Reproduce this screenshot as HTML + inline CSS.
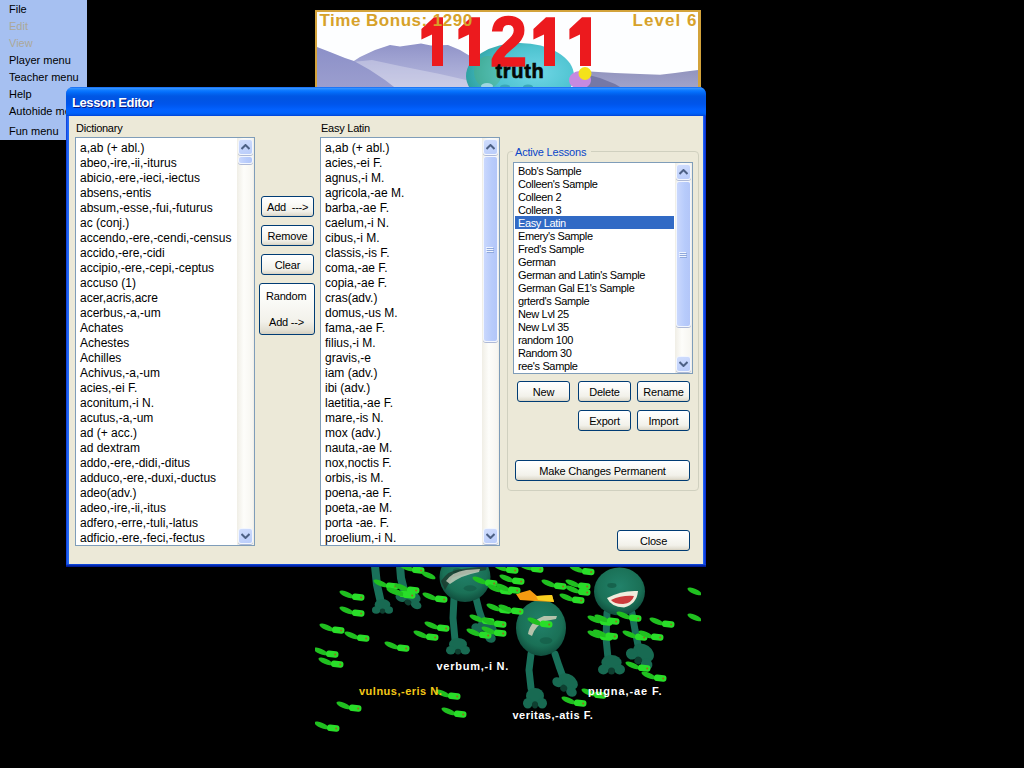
<!DOCTYPE html>
<html><head><meta charset="utf-8">
<style>
*{box-sizing:border-box}
html,body{margin:0;padding:0;background:#000;width:1024px;height:768px;overflow:hidden;font-family:"Liberation Sans",sans-serif}
.abs{position:absolute}
.t{position:absolute;white-space:pre;color:#000;line-height:1}
.m{font-size:11px}
.dis{color:#ACA899}
.lblf{font-size:11px;letter-spacing:-0.25px}
.lf{font-size:12px}
.af{font-size:11px;letter-spacing:-0.36px}
.bf{font-size:11px;letter-spacing:-0.2px}
.btn{position:absolute;border:1px solid #003C74;border-radius:3px;background:linear-gradient(#FFFFFF 0%,#FBFBF8 30%,#F2F1EA 75%,#E3E0D4 92%,#D6D0C0 100%)}
.lb{position:absolute;background:#fff;border:1px solid #7F9DB9}
.sb{position:absolute;background:linear-gradient(90deg,#F0EEE6,#FDFDFA 40%,#F7F6F1 90%,#EEECE4)}
.sbtn{position:absolute;border:1px solid #F2F6FE;border-radius:3px;background:linear-gradient(160deg,#D0DDFD,#B9CCFA);box-shadow:0 1px 0 #AEB9D6}
.thumb{position:absolute;border:1px solid #F2F6FE;border-radius:3px;background:linear-gradient(90deg,#CAD8FD,#B7CBFB 60%,#B3C6F8);box-shadow:0 1px 0 #AEB9D6}

</style></head><body>
<div id="root" class="abs" style="left:0;top:0;width:1024px;height:768px">
<svg class="abs" style="left:0;top:0" width="1024" height="768" viewBox="0 0 1024 768">
<defs>
<linearGradient id="mtA" x1="0" y1="0" x2="0" y2="1"><stop offset="0" stop-color="#8C90C8"/><stop offset="1" stop-color="#9C9FCF"/></linearGradient>
<linearGradient id="mtB" x1="0" y1="0" x2="0" y2="1"><stop offset="0" stop-color="#9093C8"/><stop offset="0.5" stop-color="#A6A9D5"/><stop offset="1" stop-color="#B9BBDD"/></linearGradient>
<linearGradient id="mtC" x1="0" y1="0" x2="0" y2="1"><stop offset="0" stop-color="#9294BE"/><stop offset="1" stop-color="#A3A5CB"/></linearGradient>
<radialGradient id="blob" cx="0.65" cy="0.45" r="0.7"><stop offset="0" stop-color="#6FD6E6"/><stop offset="0.55" stop-color="#4EC3D0"/><stop offset="1" stop-color="#2A9C9A"/></radialGradient>
<radialGradient id="head" cx="0.5" cy="0.4" r="0.65"><stop offset="0" stop-color="#22826A"/><stop offset="0.65" stop-color="#1A7056"/><stop offset="1" stop-color="#0D4436"/></radialGradient>
<g id="fish"><ellipse cx="-11.5" cy="-2.6" rx="7.6" ry="2.7" transform="rotate(24 -11.5 -2.6)" fill="#20C020"/><rect x="-6" y="-3.1" width="12.5" height="6.4" rx="3" transform="rotate(6)" fill="#29DE29"/><circle cx="3.2" cy="0.4" r="1" fill="#9A6A20"/></g>
</defs>
<rect x="315" y="10" width="386" height="80" fill="#D3A33B"/>
<rect x="317" y="12" width="381" height="78" fill="#FDFEFF"/>
<path d="M340 70 L360 57 L375 50 L390 45 L400 46.5 L414 44.5 L421 43.5 L431 45.5 L448 45 L460 50 L470 56 L480 62 L480 90 L330 90 Z" fill="url(#mtB)"/>
<path d="M352 62 L372 60 L400 66 L440 74 L475 82 L480 90 L360 90 Z" fill="#FFFFFF" opacity="0.28"/>
<path d="M317 47 L330 52 L345 58 L354 61 L370 70 L385 80 L398 90 L317 90 Z" fill="url(#mtA)"/>
<path d="M575 72 L590 71.5 L615 73 L640 74 L660 74.8 L675 73 L686 71.5 L698 70 L698 90 L575 90 Z" fill="url(#mtC)"/>
<path d="M585 74 L600 78 L615 84 L625 90 L585 90 Z" fill="#7578A6"/>
<ellipse cx="520" cy="76" rx="54" ry="33" fill="url(#blob)"/>
<ellipse cx="488" cy="72" rx="14" ry="16" fill="#55B070" opacity="0.35"/>
<ellipse cx="487" cy="86" rx="6" ry="3" fill="#9ED6E0"/><ellipse cx="505" cy="87" rx="5" ry="2.5" fill="#3AA7B8"/><ellipse cx="528" cy="87" rx="5" ry="2.5" fill="#3AA7B8"/>
<ellipse cx="580" cy="80" rx="11" ry="9" fill="#C68AE0"/>
<circle cx="585" cy="73.5" r="6.5" fill="#F4E21A"/>
<path d="M434 17.3 L443 17.3 L443 66 L432 66 L432 34.6 L421.4 39.5 L421.4 29 Z" fill="#EC1A1E"/>
<path d="M471 17.3 L480 17.3 L480 66 L469 66 L469 34.6 L458.4 39.5 L458.4 29 Z" fill="#EC1A1E"/>
<path d="M546 17.3 L555 17.3 L555 66 L544 66 L544 34.6 L533.4 39.5 L533.4 29 Z" fill="#EC1A1E"/>
<path d="M582 17.3 L591 17.3 L591 66 L580 66 L580 34.6 L569.4 39.5 L569.4 29 Z" fill="#EC1A1E"/>
<text transform="translate(490 65.5) scale(0.94 1)" x="0" y="0" font-family="Liberation Sans" font-weight="bold" font-size="71" fill="#EC1A1E" stroke="#EC1A1E" stroke-width="1.5">2</text>
<text x="495.5" y="77.5" font-family="Liberation Sans" font-weight="bold" font-size="20" letter-spacing="0.7" fill="#050805" stroke="#050805" stroke-width="0.6">truth</text>
<text x="319.5" y="26" font-family="Liberation Sans" font-weight="bold" font-size="17" letter-spacing="0.5" fill="#D7A22A">Time Bonus: 1290</text>
<text x="632.5" y="26" font-family="Liberation Sans" font-weight="bold" font-size="17" letter-spacing="1.05" fill="#D7A22A">Level 6</text>
<g>
<path d="M375 566 L377 585 L381 603" stroke="#19705A" stroke-width="8" fill="none" stroke-linecap="round" stroke-linejoin="round"/>
<g transform="rotate(0 382.5 606.5)"><ellipse cx="382.5" cy="604.625" rx="7.875" ry="5.625" fill="#186A52"/><ellipse cx="376.2" cy="609.875" rx="4.2" ry="3.75" fill="#186A52"/><ellipse cx="388.8" cy="609.875" rx="4.2" ry="3.75" fill="#186A52"/><ellipse cx="382.5" cy="611.0" rx="2.625" ry="2.625" fill="#0E3F30"/></g>
<path d="M400 566 L401 578 L404 590" stroke="#19705A" stroke-width="8" fill="none" stroke-linecap="round" stroke-linejoin="round"/>
<g transform="rotate(25 410.0 598.0)"><ellipse cx="410.0" cy="596.0" rx="10.5" ry="6.0" fill="#186A52"/><ellipse cx="401.6" cy="601.6" rx="5.6000000000000005" ry="4.0" fill="#186A52"/><ellipse cx="418.4" cy="601.6" rx="5.6000000000000005" ry="4.0" fill="#186A52"/><ellipse cx="410.0" cy="602.8" rx="3.5" ry="2.8" fill="#0E3F30"/></g>
<path d="M454 598 L453 618 L455 640" stroke="#19705A" stroke-width="7" fill="none" stroke-linecap="round" stroke-linejoin="round"/>
<g transform="rotate(0 458.0 646.5)"><ellipse cx="458.0" cy="644.375" rx="9.0" ry="6.375" fill="#186A52"/><ellipse cx="450.8" cy="650.325" rx="4.800000000000001" ry="4.25" fill="#186A52"/><ellipse cx="465.2" cy="650.325" rx="4.800000000000001" ry="4.25" fill="#186A52"/><ellipse cx="458.0" cy="651.6" rx="3.0" ry="2.9749999999999996" fill="#0E3F30"/></g>
<path d="M476 598 L479 610 L483 622" stroke="#19705A" stroke-width="7" fill="none" stroke-linecap="round" stroke-linejoin="round"/>
<g transform="rotate(35 486.0 629.5)"><ellipse cx="486.0" cy="627.125" rx="10.5" ry="7.125" fill="#186A52"/><ellipse cx="477.6" cy="633.775" rx="5.6000000000000005" ry="4.75" fill="#186A52"/><ellipse cx="494.4" cy="633.775" rx="5.6000000000000005" ry="4.75" fill="#186A52"/><ellipse cx="486.0" cy="635.2" rx="3.5" ry="3.3249999999999997" fill="#0E3F30"/></g>
<ellipse cx="465" cy="577" rx="25.5" ry="25" fill="url(#head)"/>
<ellipse cx="457.35" cy="570.75" rx="4.59" ry="2.5" fill="#145C47" opacity="0.8"/>
<ellipse cx="470.1" cy="588.25" rx="6.375" ry="3.0" fill="#145C47" opacity="0.7"/>
<path d="M441 581 Q448 570 462 569 L487 566 L486 570 Q466 573 452 578 L445 590 Z" fill="#1E2A22" opacity="0.6"/>
<path d="M446 581 Q452 572 466 570 L480 569 L479 572 Q462 575 450 584 Z" fill="#D8D8C8" opacity="0.75"/>
<path d="M531 654 L529 670 L531 688" stroke="#19705A" stroke-width="7" fill="none" stroke-linecap="round" stroke-linejoin="round"/>
<g transform="rotate(0 535.0 698.5)"><ellipse cx="535.0" cy="695.875" rx="9.0" ry="7.875" fill="#186A52"/><ellipse cx="527.8" cy="703.225" rx="4.800000000000001" ry="5.25" fill="#186A52"/><ellipse cx="542.2" cy="703.225" rx="4.800000000000001" ry="5.25" fill="#186A52"/><ellipse cx="535.0" cy="704.8" rx="3.0" ry="3.675" fill="#0E3F30"/></g>
<path d="M555 654 L559 666 L563 677" stroke="#19705A" stroke-width="7" fill="none" stroke-linecap="round" stroke-linejoin="round"/>
<g transform="rotate(35 567.0 683.5)"><ellipse cx="567.0" cy="681.125" rx="10.5" ry="7.125" fill="#186A52"/><ellipse cx="558.6" cy="687.775" rx="5.6000000000000005" ry="4.75" fill="#186A52"/><ellipse cx="575.4" cy="687.775" rx="5.6000000000000005" ry="4.75" fill="#186A52"/><ellipse cx="567.0" cy="689.2" rx="3.5" ry="3.3249999999999997" fill="#0E3F30"/></g>
<ellipse cx="541" cy="628" rx="25" ry="28" fill="url(#head)"/>
<ellipse cx="533.5" cy="621.0" rx="4.5" ry="2.8000000000000003" fill="#145C47" opacity="0.8"/>
<ellipse cx="546.0" cy="640.6" rx="6.25" ry="3.36" fill="#145C47" opacity="0.7"/>
<path d="M516 594 L530 590 L537 596 L552 595 L554 602 L535 601 L520 600 Z" fill="#F59A10"/>
<path d="M536 596 L552 595 L554 602 L538 600 Z" fill="#F8D020"/>
<path d="M528 634 Q530 621 544 616 L557 616 L556 619 L545 621 Q535 626 532 636 Z" fill="#D0D0B8" opacity="0.85"/>
<path d="M607 613 L606 638 L608 658" stroke="#19705A" stroke-width="7" fill="none" stroke-linecap="round" stroke-linejoin="round"/>
<g transform="rotate(0 611.5 665.0)"><ellipse cx="611.5" cy="662.5" rx="10.125" ry="7.5" fill="#186A52"/><ellipse cx="603.4" cy="669.5" rx="5.4" ry="5.0" fill="#186A52"/><ellipse cx="619.6" cy="669.5" rx="5.4" ry="5.0" fill="#186A52"/><ellipse cx="611.5" cy="671.0" rx="3.375" ry="3.5" fill="#0E3F30"/></g>
<path d="M632 613 L635 630 L638 645" stroke="#19705A" stroke-width="7" fill="none" stroke-linecap="round" stroke-linejoin="round"/>
<g transform="rotate(35 642.0 655.0)"><ellipse cx="642.0" cy="652.25" rx="11.25" ry="8.25" fill="#186A52"/><ellipse cx="633.0" cy="659.95" rx="6.0" ry="5.5" fill="#186A52"/><ellipse cx="651.0" cy="659.95" rx="6.0" ry="5.5" fill="#186A52"/><ellipse cx="642.0" cy="661.6" rx="3.75" ry="3.8499999999999996" fill="#0E3F30"/></g>
<ellipse cx="619.5" cy="591.5" rx="25.5" ry="24" fill="url(#head)"/>
<ellipse cx="611.85" cy="585.5" rx="4.59" ry="2.4000000000000004" fill="#145C47" opacity="0.8"/>
<ellipse cx="624.6" cy="602.3" rx="6.375" ry="2.88" fill="#145C47" opacity="0.7"/>
<path d="M607 598 Q622 590 638 591 Q637 604 624 607.5 Q611 607 607 598 Z" fill="#F0ECDC"/>
<path d="M611 600 Q622 595 634 596 Q632 603 623 604 Q614 604 611 600 Z" fill="#CC3C3C"/>
<use href="#fish" x="358" y="597"/>
<use href="#fish" x="358" y="613"/>
<use href="#fish" x="338" y="630"/>
<use href="#fish" x="363" y="638"/>
<use href="#fish" x="332" y="654"/>
<use href="#fish" x="337" y="664"/>
<use href="#fish" x="403" y="648"/>
<use href="#fish" x="392" y="586"/>
<use href="#fish" x="405" y="594"/>
<use href="#fish" x="418" y="570"/>
<ellipse cx="428.5" cy="575.4" rx="7.6" ry="2.7" transform="rotate(24 428.5 575.4)" fill="#20C020"/>
<use href="#fish" x="413" y="590"/>
<use href="#fish" x="409" y="595"/>
<use href="#fish" x="441" y="599"/>
<use href="#fish" x="443" y="628"/>
<use href="#fish" x="432" y="637"/>
<use href="#fish" x="491" y="583"/>
<use href="#fish" x="506" y="591"/>
<use href="#fish" x="505" y="610"/>
<use href="#fish" x="488" y="621"/>
<use href="#fish" x="500" y="624"/>
<use href="#fish" x="485" y="635"/>
<use href="#fish" x="500" y="633"/>
<use href="#fish" x="512" y="570"/>
<use href="#fish" x="537" y="569"/>
<use href="#fish" x="518" y="581"/>
<use href="#fish" x="514" y="590"/>
<use href="#fish" x="517" y="611"/>
<use href="#fish" x="560" y="586"/>
<use href="#fish" x="584" y="586"/>
<use href="#fish" x="584" y="592"/>
<use href="#fish" x="578" y="600"/>
<use href="#fish" x="588" y="571.5"/>
<use href="#fish" x="546" y="624"/>
<use href="#fish" x="606" y="622"/>
<use href="#fish" x="606" y="637"/>
<use href="#fish" x="613" y="621"/>
<use href="#fish" x="611.5" y="636"/>
<use href="#fish" x="635" y="618"/>
<use href="#fish" x="668" y="624"/>
<use href="#fish" x="641" y="637"/>
<use href="#fish" x="657" y="637"/>
<ellipse cx="694.5" cy="591.4" rx="7.6" ry="2.7" transform="rotate(24 694.5 591.4)" fill="#20C020"/>
<ellipse cx="694.5" cy="617.4" rx="7.6" ry="2.7" transform="rotate(24 694.5 617.4)" fill="#20C020"/>
<use href="#fish" x="644" y="668"/>
<use href="#fish" x="660" y="678"/>
<use href="#fish" x="454" y="696"/>
<use href="#fish" x="355" y="708"/>
<use href="#fish" x="460" y="714"/>
<use href="#fish" x="333" y="728"/>
<use href="#fish" x="580" y="703"/>
<use href="#fish" x="600" y="695"/>
</g>
<rect x="701" y="567" width="323" height="201" fill="#000"/>
<rect x="0" y="567" width="315" height="201" fill="#000"/>
<text x="436.5" y="670" font-family="Liberation Sans" font-weight="bold" font-size="11" letter-spacing="0.75" fill="#FFFFFF">verbum,-i N.</text>
<text x="359" y="694.5" font-family="Liberation Sans" font-weight="bold" font-size="11" letter-spacing="0.5" fill="#F4C818">vulnus,-eris N.</text>
<text x="588" y="694.5" font-family="Liberation Sans" font-weight="bold" font-size="11" letter-spacing="0.9" fill="#FFFFFF">pugna,-ae F.</text>
<text x="512.5" y="718.5" font-family="Liberation Sans" font-weight="bold" font-size="11" letter-spacing="0.5" fill="#FFFFFF">veritas,-atis F.</text>
</svg>
<div class="abs" style="left:0;top:0;width:87px;height:140px;background:#A6C0F1"></div>
<div class="t m " style="left:9px;top:4px;">File</div>
<div class="t m dis" style="left:9px;top:21px;">Edit</div>
<div class="t m dis" style="left:9px;top:38px;">View</div>
<div class="t m " style="left:9px;top:55px;">Player menu</div>
<div class="t m " style="left:9px;top:72px;">Teacher menu</div>
<div class="t m " style="left:9px;top:89px;">Help</div>
<div class="t m " style="left:9px;top:106px;">Autohide menu</div>
<div class="t m " style="left:9px;top:126px;">Fun menu</div>
<div class="abs" style="left:66px;top:87px;width:640px;height:480px;background:linear-gradient(90deg,#0A2FD0 0px,#1A5CF0 1px,#2468F4 2px,#2468F4 637px,#1A5CF0 638px,#0A2FD0 639px);border-radius:7px 7px 0 0"></div>
<div class="abs" style="left:66px;top:564px;width:640px;height:3px;background:linear-gradient(#1450E8,#0838C8 1px,#001C96 2px)"></div>
<div class="abs" style="left:66px;top:87px;width:640px;height:29px;border-radius:7px 7px 0 0;background:linear-gradient(#0058EE 0px,#3A93FF 1px,#288EFF 2px,#127DFF 3px,#036FFC 5px,#0262EE 7px,#0057E5 9px,#0054E3 12px,#0055EB 17px,#005BF5 20px,#0260FC 22px,#0262FF 24px,#0062FC 26px,#0055E6 28px,#003DD7 29px)"></div>
<div class="t" style="left:72px;top:96px;font-size:13px;font-weight:bold;color:#fff;letter-spacing:-0.4px;text-shadow:1px 1px 0 #0A1883">Lesson Editor</div>
<div class="abs" style="left:69px;top:116px;width:634px;height:448px;background:#ECE9D8"></div>
<div class="t lblf" style="left:76px;top:123px;">Dictionary</div>
<div class="t lblf" style="left:321px;top:123px;">Easy Latin</div>
<div class="lb" style="left:75px;top:137px;width:180px;height:409px"></div>
<div class="t lf" style="left:80px;top:142px;">a,ab (+ abl.)</div>
<div class="t lf" style="left:80px;top:157px;">abeo,-ire,-ii,-iturus</div>
<div class="t lf" style="left:80px;top:172px;">abicio,-ere,-ieci,-iectus</div>
<div class="t lf" style="left:80px;top:187px;">absens,-entis</div>
<div class="t lf" style="left:80px;top:202px;">absum,-esse,-fui,-futurus</div>
<div class="t lf" style="left:80px;top:217px;">ac (conj.)</div>
<div class="t lf" style="left:80px;top:232px;">accendo,-ere,-cendi,-census</div>
<div class="t lf" style="left:80px;top:247px;">accido,-ere,-cidi</div>
<div class="t lf" style="left:80px;top:262px;">accipio,-ere,-cepi,-ceptus</div>
<div class="t lf" style="left:80px;top:277px;">accuso (1)</div>
<div class="t lf" style="left:80px;top:292px;">acer,acris,acre</div>
<div class="t lf" style="left:80px;top:307px;">acerbus,-a,-um</div>
<div class="t lf" style="left:80px;top:322px;">Achates</div>
<div class="t lf" style="left:80px;top:337px;">Achestes</div>
<div class="t lf" style="left:80px;top:352px;">Achilles</div>
<div class="t lf" style="left:80px;top:367px;">Achivus,-a,-um</div>
<div class="t lf" style="left:80px;top:382px;">acies,-ei F.</div>
<div class="t lf" style="left:80px;top:397px;">aconitum,-i N.</div>
<div class="t lf" style="left:80px;top:412px;">acutus,-a,-um</div>
<div class="t lf" style="left:80px;top:427px;">ad (+ acc.)</div>
<div class="t lf" style="left:80px;top:442px;">ad dextram</div>
<div class="t lf" style="left:80px;top:457px;">addo,-ere,-didi,-ditus</div>
<div class="t lf" style="left:80px;top:472px;">adduco,-ere,-duxi,-ductus</div>
<div class="t lf" style="left:80px;top:487px;">adeo(adv.)</div>
<div class="t lf" style="left:80px;top:502px;">adeo,-ire,-ii,-itus</div>
<div class="t lf" style="left:80px;top:517px;">adfero,-erre,-tuli,-latus</div>
<div class="t lf" style="left:80px;top:532px;">adficio,-ere,-feci,-fectus</div>
<div class="sb" style="left:237px;top:138px;width:17px;height:407px"></div>
<div class="sbtn" style="left:238px;top:139px;width:15px;height:16px"></div>
<svg class="abs" style="left:241px;top:144px" width="9" height="6"><path d="M0.5 5 L4.5 1 L8.5 5" fill="none" stroke="#4D6185" stroke-width="2"/></svg>
<div class="sbtn" style="left:238px;top:528px;width:15px;height:16px"></div>
<svg class="abs" style="left:241px;top:533px" width="9" height="6"><path d="M0.5 1 L4.5 5 L8.5 1" fill="none" stroke="#4D6185" stroke-width="2"/></svg>
<div class="thumb" style="left:238px;top:156px;width:15px;height:8px"></div>
<div class="lb" style="left:320px;top:137px;width:180px;height:409px"></div>
<div class="t lf" style="left:325px;top:142px;">a,ab (+ abl.)</div>
<div class="t lf" style="left:325px;top:157px;">acies,-ei F.</div>
<div class="t lf" style="left:325px;top:172px;">agnus,-i M.</div>
<div class="t lf" style="left:325px;top:187px;">agricola,-ae M.</div>
<div class="t lf" style="left:325px;top:202px;">barba,-ae F.</div>
<div class="t lf" style="left:325px;top:217px;">caelum,-i N.</div>
<div class="t lf" style="left:325px;top:232px;">cibus,-i M.</div>
<div class="t lf" style="left:325px;top:247px;">classis,-is F.</div>
<div class="t lf" style="left:325px;top:262px;">coma,-ae F.</div>
<div class="t lf" style="left:325px;top:277px;">copia,-ae F.</div>
<div class="t lf" style="left:325px;top:292px;">cras(adv.)</div>
<div class="t lf" style="left:325px;top:307px;">domus,-us M.</div>
<div class="t lf" style="left:325px;top:322px;">fama,-ae F.</div>
<div class="t lf" style="left:325px;top:337px;">filius,-i M.</div>
<div class="t lf" style="left:325px;top:352px;">gravis,-e</div>
<div class="t lf" style="left:325px;top:367px;">iam (adv.)</div>
<div class="t lf" style="left:325px;top:382px;">ibi (adv.)</div>
<div class="t lf" style="left:325px;top:397px;">laetitia,-ae F.</div>
<div class="t lf" style="left:325px;top:412px;">mare,-is N.</div>
<div class="t lf" style="left:325px;top:427px;">mox (adv.)</div>
<div class="t lf" style="left:325px;top:442px;">nauta,-ae M.</div>
<div class="t lf" style="left:325px;top:457px;">nox,noctis F.</div>
<div class="t lf" style="left:325px;top:472px;">orbis,-is M.</div>
<div class="t lf" style="left:325px;top:487px;">poena,-ae F.</div>
<div class="t lf" style="left:325px;top:502px;">poeta,-ae M.</div>
<div class="t lf" style="left:325px;top:517px;">porta -ae. F.</div>
<div class="t lf" style="left:325px;top:532px;">proelium,-i N.</div>
<div class="sb" style="left:482px;top:138px;width:17px;height:407px"></div>
<div class="sbtn" style="left:483px;top:139px;width:15px;height:16px"></div>
<svg class="abs" style="left:486px;top:144px" width="9" height="6"><path d="M0.5 5 L4.5 1 L8.5 5" fill="none" stroke="#4D6185" stroke-width="2"/></svg>
<div class="sbtn" style="left:483px;top:528px;width:15px;height:16px"></div>
<svg class="abs" style="left:486px;top:533px" width="9" height="6"><path d="M0.5 1 L4.5 5 L8.5 1" fill="none" stroke="#4D6185" stroke-width="2"/></svg>
<div class="thumb" style="left:483px;top:156px;width:15px;height:186px"></div>
<div class="abs" style="left:486px;top:247px;width:7px;height:1px;background:#EEF4FE;box-shadow:1px 1px 0 #8FA8DC"></div>
<div class="abs" style="left:486px;top:249px;width:7px;height:1px;background:#EEF4FE;box-shadow:1px 1px 0 #8FA8DC"></div>
<div class="abs" style="left:486px;top:251px;width:7px;height:1px;background:#EEF4FE;box-shadow:1px 1px 0 #8FA8DC"></div>
<div class="btn" style="left:261px;top:196px;width:53px;height:21px;"></div>
<div class="t bf" style="left:267px;top:202px;">Add  ---&gt;</div>
<div class="btn" style="left:261px;top:225px;width:53px;height:21px;"></div>
<div class="t bf" style="left:261px;width:53px;text-align:center;top:231px">Remove</div>
<div class="btn" style="left:261px;top:254px;width:53px;height:21px;"></div>
<div class="t bf" style="left:261px;width:53px;text-align:center;top:260px">Clear</div>
<div class="btn" style="left:259px;top:283px;width:56px;height:52px;"></div>
<div class="t bf" style="left:266px;top:291px;">Random</div>
<div class="t bf" style="left:269px;top:317px;">Add --&gt;</div>
<div class="abs" style="left:507px;top:151px;width:192px;height:340px;border:1px solid #D0D0BF;border-radius:4px"></div>
<div class="abs" style="left:513px;top:144px;width:78px;height:14px;background:#ECE9D8"></div>
<div class="t bf" style="left:515px;top:147px;color:#0A46C8">Active Lessons</div>
<div class="lb" style="left:513px;top:162px;width:180px;height:212px"></div>
<div class="abs" style="left:515px;top:216px;width:159px;height:13px;background:#316AC5"></div>
<div class="t af" style="left:518px;top:166px;">Bob&#x27;s Sample</div>
<div class="t af" style="left:518px;top:179px;">Colleen&#x27;s Sample</div>
<div class="t af" style="left:518px;top:192px;">Colleen 2</div>
<div class="t af" style="left:518px;top:205px;">Colleen 3</div>
<div class="t af" style="left:518px;top:218px;color:#fff">Easy Latin</div>
<div class="t af" style="left:518px;top:231px;">Emery&#x27;s Sample</div>
<div class="t af" style="left:518px;top:244px;">Fred&#x27;s Sample</div>
<div class="t af" style="left:518px;top:257px;">German</div>
<div class="t af" style="left:518px;top:270px;">German and Latin&#x27;s Sample</div>
<div class="t af" style="left:518px;top:283px;">German Gal E1&#x27;s Sample</div>
<div class="t af" style="left:518px;top:296px;">grterd&#x27;s Sample</div>
<div class="t af" style="left:518px;top:309px;">New Lvl 25</div>
<div class="t af" style="left:518px;top:322px;">New Lvl 35</div>
<div class="t af" style="left:518px;top:335px;">random 100</div>
<div class="t af" style="left:518px;top:348px;">Random 30</div>
<div class="t af" style="left:518px;top:361px;">ree&#x27;s Sample</div>
<div class="sb" style="left:675px;top:163px;width:17px;height:210px"></div>
<div class="sbtn" style="left:676px;top:164px;width:15px;height:16px"></div>
<svg class="abs" style="left:679px;top:169px" width="9" height="6"><path d="M0.5 5 L4.5 1 L8.5 5" fill="none" stroke="#4D6185" stroke-width="2"/></svg>
<div class="sbtn" style="left:676px;top:356px;width:15px;height:16px"></div>
<svg class="abs" style="left:679px;top:361px" width="9" height="6"><path d="M0.5 1 L4.5 5 L8.5 1" fill="none" stroke="#4D6185" stroke-width="2"/></svg>
<div class="thumb" style="left:676px;top:181px;width:15px;height:146px"></div>
<div class="abs" style="left:679px;top:252px;width:7px;height:1px;background:#EEF4FE;box-shadow:1px 1px 0 #8FA8DC"></div>
<div class="abs" style="left:679px;top:254px;width:7px;height:1px;background:#EEF4FE;box-shadow:1px 1px 0 #8FA8DC"></div>
<div class="abs" style="left:679px;top:256px;width:7px;height:1px;background:#EEF4FE;box-shadow:1px 1px 0 #8FA8DC"></div>
<div class="btn" style="left:517px;top:381px;width:53px;height:21px;"></div>
<div class="t bf" style="left:517px;width:53px;text-align:center;top:387px">New</div>
<div class="btn" style="left:578px;top:381px;width:53px;height:21px;"></div>
<div class="t bf" style="left:578px;width:53px;text-align:center;top:387px">Delete</div>
<div class="btn" style="left:637px;top:381px;width:53px;height:21px;"></div>
<div class="t bf" style="left:637px;width:53px;text-align:center;top:387px">Rename</div>
<div class="btn" style="left:578px;top:410px;width:53px;height:21px;"></div>
<div class="t bf" style="left:578px;width:53px;text-align:center;top:416px">Export</div>
<div class="btn" style="left:637px;top:410px;width:53px;height:21px;"></div>
<div class="t bf" style="left:637px;width:53px;text-align:center;top:416px">Import</div>
<div class="btn" style="left:515px;top:460px;width:175px;height:21px;"></div>
<div class="t bf" style="left:515px;width:175px;text-align:center;top:466px">Make Changes Permanent</div>
<div class="btn" style="left:617px;top:530px;width:73px;height:21px;"></div>
<div class="t bf" style="left:617px;width:73px;text-align:center;top:536px">Close</div>
</div>
</body></html>
